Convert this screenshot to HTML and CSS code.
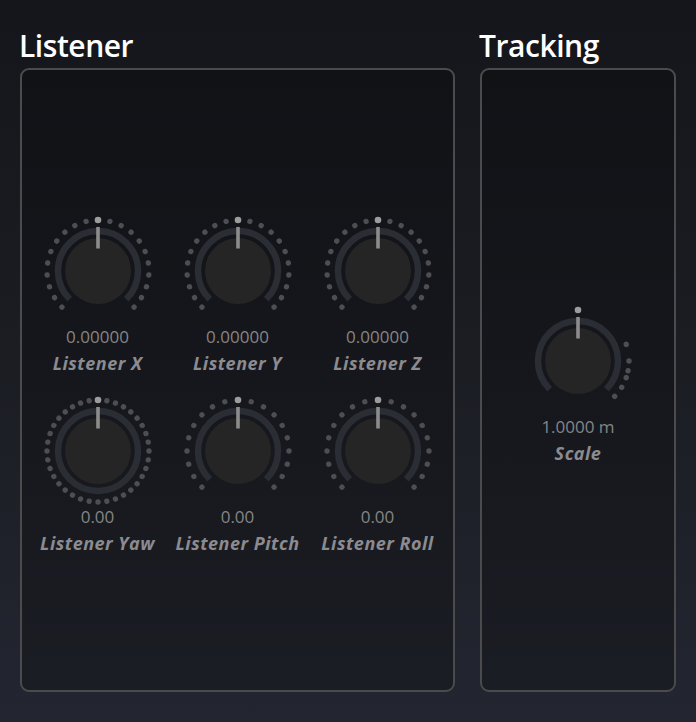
FILE: index.html
```html
<!DOCTYPE html>
<html lang="en">
<head>
<meta charset="utf-8">
<title>Listener / Tracking</title>
<link rel="stylesheet" href="styles.css">
</head>
<body>
<svg class="defs" width="0" height="0" aria-hidden="true">
  <defs>
    <g id="dots21" fill="#4c4e54">
      <circle cx="56" cy="5" r="2.7" transform="rotate(-135 56 56)"/>
      <circle cx="56" cy="5" r="2.7" transform="rotate(-121.5 56 56)"/>
      <circle cx="56" cy="5" r="2.7" transform="rotate(-108 56 56)"/>
      <circle cx="56" cy="5" r="2.7" transform="rotate(-94.5 56 56)"/>
      <circle cx="56" cy="5" r="2.7" transform="rotate(-81 56 56)"/>
      <circle cx="56" cy="5" r="2.7" transform="rotate(-67.5 56 56)"/>
      <circle cx="56" cy="5" r="2.7" transform="rotate(-54 56 56)"/>
      <circle cx="56" cy="5" r="2.7" transform="rotate(-40.5 56 56)"/>
      <circle cx="56" cy="5" r="2.7" transform="rotate(-27 56 56)"/>
      <circle cx="56" cy="5" r="2.7" transform="rotate(-13.5 56 56)"/>
      <circle cx="56" cy="5" r="2.7" transform="rotate(13.5 56 56)"/>
      <circle cx="56" cy="5" r="2.7" transform="rotate(27 56 56)"/>
      <circle cx="56" cy="5" r="2.7" transform="rotate(40.5 56 56)"/>
      <circle cx="56" cy="5" r="2.7" transform="rotate(54 56 56)"/>
      <circle cx="56" cy="5" r="2.7" transform="rotate(67.5 56 56)"/>
      <circle cx="56" cy="5" r="2.7" transform="rotate(81 56 56)"/>
      <circle cx="56" cy="5" r="2.7" transform="rotate(94.5 56 56)"/>
      <circle cx="56" cy="5" r="2.7" transform="rotate(108 56 56)"/>
      <circle cx="56" cy="5" r="2.7" transform="rotate(121.5 56 56)"/>
      <circle cx="56" cy="5" r="2.7" transform="rotate(135 56 56)"/>
    </g>
    <g id="dots19" fill="#4c4e54">
      <circle cx="56" cy="5" r="2.7" transform="rotate(-135 56 56)"/>
      <circle cx="56" cy="5" r="2.7" transform="rotate(-120 56 56)"/>
      <circle cx="56" cy="5" r="2.7" transform="rotate(-105 56 56)"/>
      <circle cx="56" cy="5" r="2.7" transform="rotate(-90 56 56)"/>
      <circle cx="56" cy="5" r="2.7" transform="rotate(-75 56 56)"/>
      <circle cx="56" cy="5" r="2.7" transform="rotate(-60 56 56)"/>
      <circle cx="56" cy="5" r="2.7" transform="rotate(-45 56 56)"/>
      <circle cx="56" cy="5" r="2.7" transform="rotate(-30 56 56)"/>
      <circle cx="56" cy="5" r="2.7" transform="rotate(-15 56 56)"/>
      <circle cx="56" cy="5" r="2.7" transform="rotate(15 56 56)"/>
      <circle cx="56" cy="5" r="2.7" transform="rotate(30 56 56)"/>
      <circle cx="56" cy="5" r="2.7" transform="rotate(45 56 56)"/>
      <circle cx="56" cy="5" r="2.7" transform="rotate(60 56 56)"/>
      <circle cx="56" cy="5" r="2.7" transform="rotate(75 56 56)"/>
      <circle cx="56" cy="5" r="2.7" transform="rotate(90 56 56)"/>
      <circle cx="56" cy="5" r="2.7" transform="rotate(105 56 56)"/>
      <circle cx="56" cy="5" r="2.7" transform="rotate(120 56 56)"/>
      <circle cx="56" cy="5" r="2.7" transform="rotate(135 56 56)"/>
    </g>
    <g id="dots36" fill="#4c4e54">
      <circle cx="56" cy="5" r="2.7" transform="rotate(10 56 56)"/>
      <circle cx="56" cy="5" r="2.7" transform="rotate(20 56 56)"/>
      <circle cx="56" cy="5" r="2.7" transform="rotate(30 56 56)"/>
      <circle cx="56" cy="5" r="2.7" transform="rotate(40 56 56)"/>
      <circle cx="56" cy="5" r="2.7" transform="rotate(50 56 56)"/>
      <circle cx="56" cy="5" r="2.7" transform="rotate(60 56 56)"/>
      <circle cx="56" cy="5" r="2.7" transform="rotate(70 56 56)"/>
      <circle cx="56" cy="5" r="2.7" transform="rotate(80 56 56)"/>
      <circle cx="56" cy="5" r="2.7" transform="rotate(90 56 56)"/>
      <circle cx="56" cy="5" r="2.7" transform="rotate(100 56 56)"/>
      <circle cx="56" cy="5" r="2.7" transform="rotate(110 56 56)"/>
      <circle cx="56" cy="5" r="2.7" transform="rotate(120 56 56)"/>
      <circle cx="56" cy="5" r="2.7" transform="rotate(130 56 56)"/>
      <circle cx="56" cy="5" r="2.7" transform="rotate(140 56 56)"/>
      <circle cx="56" cy="5" r="2.7" transform="rotate(150 56 56)"/>
      <circle cx="56" cy="5" r="2.7" transform="rotate(160 56 56)"/>
      <circle cx="56" cy="5" r="2.7" transform="rotate(170 56 56)"/>
      <circle cx="56" cy="5" r="2.7" transform="rotate(180 56 56)"/>
      <circle cx="56" cy="5" r="2.7" transform="rotate(190 56 56)"/>
      <circle cx="56" cy="5" r="2.7" transform="rotate(200 56 56)"/>
      <circle cx="56" cy="5" r="2.7" transform="rotate(210 56 56)"/>
      <circle cx="56" cy="5" r="2.7" transform="rotate(220 56 56)"/>
      <circle cx="56" cy="5" r="2.7" transform="rotate(230 56 56)"/>
      <circle cx="56" cy="5" r="2.7" transform="rotate(240 56 56)"/>
      <circle cx="56" cy="5" r="2.7" transform="rotate(250 56 56)"/>
      <circle cx="56" cy="5" r="2.7" transform="rotate(260 56 56)"/>
      <circle cx="56" cy="5" r="2.7" transform="rotate(270 56 56)"/>
      <circle cx="56" cy="5" r="2.7" transform="rotate(280 56 56)"/>
      <circle cx="56" cy="5" r="2.7" transform="rotate(290 56 56)"/>
      <circle cx="56" cy="5" r="2.7" transform="rotate(300 56 56)"/>
      <circle cx="56" cy="5" r="2.7" transform="rotate(310 56 56)"/>
      <circle cx="56" cy="5" r="2.7" transform="rotate(320 56 56)"/>
      <circle cx="56" cy="5" r="2.7" transform="rotate(330 56 56)"/>
      <circle cx="56" cy="5" r="2.7" transform="rotate(340 56 56)"/>
      <circle cx="56" cy="5" r="2.7" transform="rotate(350 56 56)"/>
    </g>
    <g id="dotsScale" fill="#4c4e54">
      <circle cx="56" cy="5" r="2.7" transform="rotate(71 56 56)"/>
      <circle cx="56" cy="5" r="2.7" transform="rotate(90 56 56)"/>
      <circle cx="56" cy="5" r="2.7" transform="rotate(101 56 56)"/>
      <circle cx="56" cy="5" r="2.7" transform="rotate(109 56 56)"/>
      <circle cx="56" cy="5" r="2.7" transform="rotate(121 56 56)"/>
      <circle cx="56" cy="5" r="2.7" transform="rotate(134 56 56)"/>
    </g>
    <g id="body">
      <circle cx="56" cy="5" r="3.3" fill="#9c9c9c"/>
      <circle cx="56" cy="56" r="33" fill="#252525"/>
      <rect x="54.2" y="12" width="3.6" height="21.5" fill="#8c8c8c"/>
    </g>
    <path id="arc" d="M27.72 84.28 A40 40 0 1 1 84.28 84.28" fill="none" stroke="#2b2d35" stroke-width="6.5"/>
    <circle id="ring" cx="56" cy="56" r="40" fill="none" stroke="#2b2d35" stroke-width="6.5"/>
  </defs>
</svg>

<main class="app">
  <section class="group group-listener">
    <h2 class="title">Listener</h2>
    <div class="panel">
      <div class="knob-grid">
        <div class="knob">
          <svg class="dial" viewBox="0 0 112 112" width="112" height="112"><use href="#arc"/><use href="#dots21"/><use href="#body"/></svg>
          <div class="value">0.00000</div>
          <div class="label">Listener X</div>
        </div>
        <div class="knob">
          <svg class="dial" viewBox="0 0 112 112" width="112" height="112"><use href="#arc"/><use href="#dots21"/><use href="#body"/></svg>
          <div class="value">0.00000</div>
          <div class="label">Listener Y</div>
        </div>
        <div class="knob">
          <svg class="dial" viewBox="0 0 112 112" width="112" height="112"><use href="#arc"/><use href="#dots21"/><use href="#body"/></svg>
          <div class="value">0.00000</div>
          <div class="label">Listener Z</div>
        </div>
        <div class="knob">
          <svg class="dial" viewBox="0 0 112 112" width="112" height="112"><use href="#ring"/><use href="#dots36"/><use href="#body"/></svg>
          <div class="value">0.00</div>
          <div class="label">Listener Yaw</div>
        </div>
        <div class="knob">
          <svg class="dial" viewBox="0 0 112 112" width="112" height="112"><use href="#arc"/><use href="#dots19"/><use href="#body"/></svg>
          <div class="value">0.00</div>
          <div class="label">Listener Pitch</div>
        </div>
        <div class="knob">
          <svg class="dial" viewBox="0 0 112 112" width="112" height="112"><use href="#arc"/><use href="#dots19"/><use href="#body"/></svg>
          <div class="value">0.00</div>
          <div class="label">Listener Roll</div>
        </div>
      </div>
    </div>
  </section>
  <section class="group group-tracking">
    <h2 class="title">Tracking</h2>
    <div class="panel">
      <div class="knob">
        <svg class="dial" viewBox="0 0 112 112" width="112" height="112"><use href="#arc"/><use href="#dotsScale"/><use href="#body"/></svg>
        <div class="value">1.0000 m</div>
        <div class="label">Scale</div>
      </div>
    </div>
  </section>
</main>
</body>
</html>
```

FILE: styles.css
```css
html, body {
  margin: 0;
  padding: 0;
}

body {
  width: 696px;
  height: 722px;
  overflow: hidden;
  background: linear-gradient(180deg, #15161b 0%, #1b1d23 50%, #232631 100%);
  font-family: "Open Sans", "Noto Sans", sans-serif;
  color: #8a8a8a;
}

.defs {
  display: block;
  width: 0;
  height: 0;
  overflow: hidden;
}

.app {
  display: flex;
  gap: 25px;
  padding: 28px 20px 0 20px;
}

.group {
  display: flex;
  flex-direction: column;
}

.group-listener {
  width: 435px;
}

.group-tracking {
  width: 196px;
}

.title {
  margin: 0 0 4px 0;
  font-size: 30px;
  line-height: 36px;
  font-weight: 600;
  color: #ffffff;
  letter-spacing: -0.45px;
}

.group-listener .title {
  margin-left: -1px;
}

.group-tracking .title {
  margin-left: -1px;
}

.panel {
  box-sizing: border-box;
  height: 624px;
  border: 2px solid #4b4b4d;
  border-radius: 9px;
  background: linear-gradient(180deg, #111216 0%, #16171c 50%, #1b1d24 100%);
  display: flex;
  align-items: center;
  justify-content: center;
  padding-top: 9px;
}

.knob-grid {
  display: grid;
  grid-template-columns: repeat(3, 140px);
  grid-auto-rows: 160px;
  row-gap: 20px;
}

.knob {
  width: 140px;
  height: 160px;
  display: flex;
  flex-direction: column;
  align-items: center;
}

.dial {
  display: block;
  flex: none;
}

.value {
  font-size: 17px;
  line-height: 20px;
  color: #858585;
  white-space: nowrap;
}

.label {
  margin-top: 4px;
  font-size: 18px;
  line-height: 24px;
  font-weight: 700;
  font-style: italic;
  color: #8b8b90;
  letter-spacing: 0.5px;
  white-space: nowrap;
}
```
